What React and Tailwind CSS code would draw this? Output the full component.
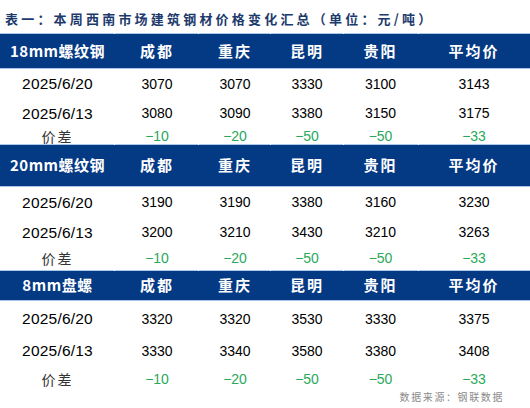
import React from "react";

const cols = ["w-[115px]", "w-[84px]", "w-[72px]", "w-[72px]", "w-[75px]", "w-[112px]"];
const cities = ["成都", "重庆", "昆明", "贵阳", "平均价"];

const blocks = [
  {
    name: "18mm螺纹钢",
    h: ["h-[34px]", "h-[30px]", "h-[29px]", "h-[16px]"],
    r1: ["2025/6/20", "3070", "3070", "3330", "3100", "3143"],
    r2: ["2025/6/13", "3080", "3090", "3380", "3150", "3175"],
    d: ["-10", "-20", "-50", "-50", "-33"],
  },
  {
    name: "20mm螺纹钢",
    h: ["h-[41px]", "h-[31px]", "h-[29px]", "h-[23px]"],
    r1: ["2025/6/20", "3190", "3190", "3380", "3160", "3230"],
    r2: ["2025/6/13", "3200", "3210", "3430", "3210", "3263"],
    d: ["-10", "-20", "-50", "-50", "-33"],
  },
  {
    name: "8mm盘螺",
    h: ["h-[29px]", "h-[36px]", "h-[28px]", "h-[28px]"],
    r1: ["2025/6/20", "3320", "3320", "3530", "3330", "3375"],
    r2: ["2025/6/13", "3330", "3340", "3580", "3380", "3408"],
    d: ["-10", "-20", "-50", "-50", "-33"],
  },
];

const cjk = "font-['Noto_Sans_CJK_SC',sans-serif]";
const num = "font-['Liberation_Sans','Noto_Sans_CJK_SC',sans-serif]";

function Line() {
  return (
    <div className="flex h-px gap-px">
      {cols.map((c, i) => (
        <div key={i} className={`${c} bg-[#a9c8ea]`} />
      ))}
    </div>
  );
}

function Block({ b }) {
  return (
    <div>
      <Line />
      <div className={`flex ${b.h[0]} bg-[#043984] text-white`}>
        {[b.name, ...cities].map((t, i) => (
          <div
            key={i}
            className={`${cols[i]} flex items-center justify-center ${cjk} font-bold text-[15px] ${i === 0 ? "tracking-[0.5px]" : "tracking-[2px]"}`}
          >
            {t}
          </div>
        ))}
      </div>
      <div className="h-px bg-[#a9c8ea]" />
      {[b.r1, b.r2].map((r, ri) => (
        <div key={ri} className={`flex ${b.h[ri + 1]} text-black`}>
          {r.map((t, i) => (
            <div
              key={i}
              className={`${cols[i]} flex items-center justify-center ${num} ${i === 0 ? "text-[15.5px] tracking-[0.2px]" : "text-[14px]"}`}
            >
              {t}
            </div>
          ))}
        </div>
      ))}
      <div className={`flex ${b.h[3]}`}>
        <div className={`${cols[0]} flex items-center justify-center ${cjk} text-[14px] tracking-[2px] text-[#333]`}>
          价差
        </div>
        {b.d.map((t, i) => (
          <div
            key={i}
            className={`${cols[i + 1]} flex items-center justify-center ${num} text-[14px] text-[#2aa85a]`}
          >
            {t.replace("-", "−")}
          </div>
        ))}
      </div>
    </div>
  );
}

export default function App() {
  return (
    <div className="w-[530px] h-[408px] bg-white overflow-hidden">
      <div className="h-[33px] flex items-center pl-[5px] pt-[3px]">
        <span className={`${cjk} font-bold text-[13px] leading-none tracking-[3.2px] text-[#1d3a6c] whitespace-nowrap`}>
          表一：本周西南市场建筑钢材价格变化汇总（单位：元/吨）
        </span>
      </div>
      {blocks.map((b, i) => (
        <Block key={i} b={b} />
      ))}
      <div className="flex justify-end pr-[26px] -mt-[3px]">
        <span className={`${cjk} text-[10px] leading-[14px] tracking-[1.6px] text-[#8a8a8a]`}>数据来源：钢联数据</span>
      </div>
    </div>
  );
}
